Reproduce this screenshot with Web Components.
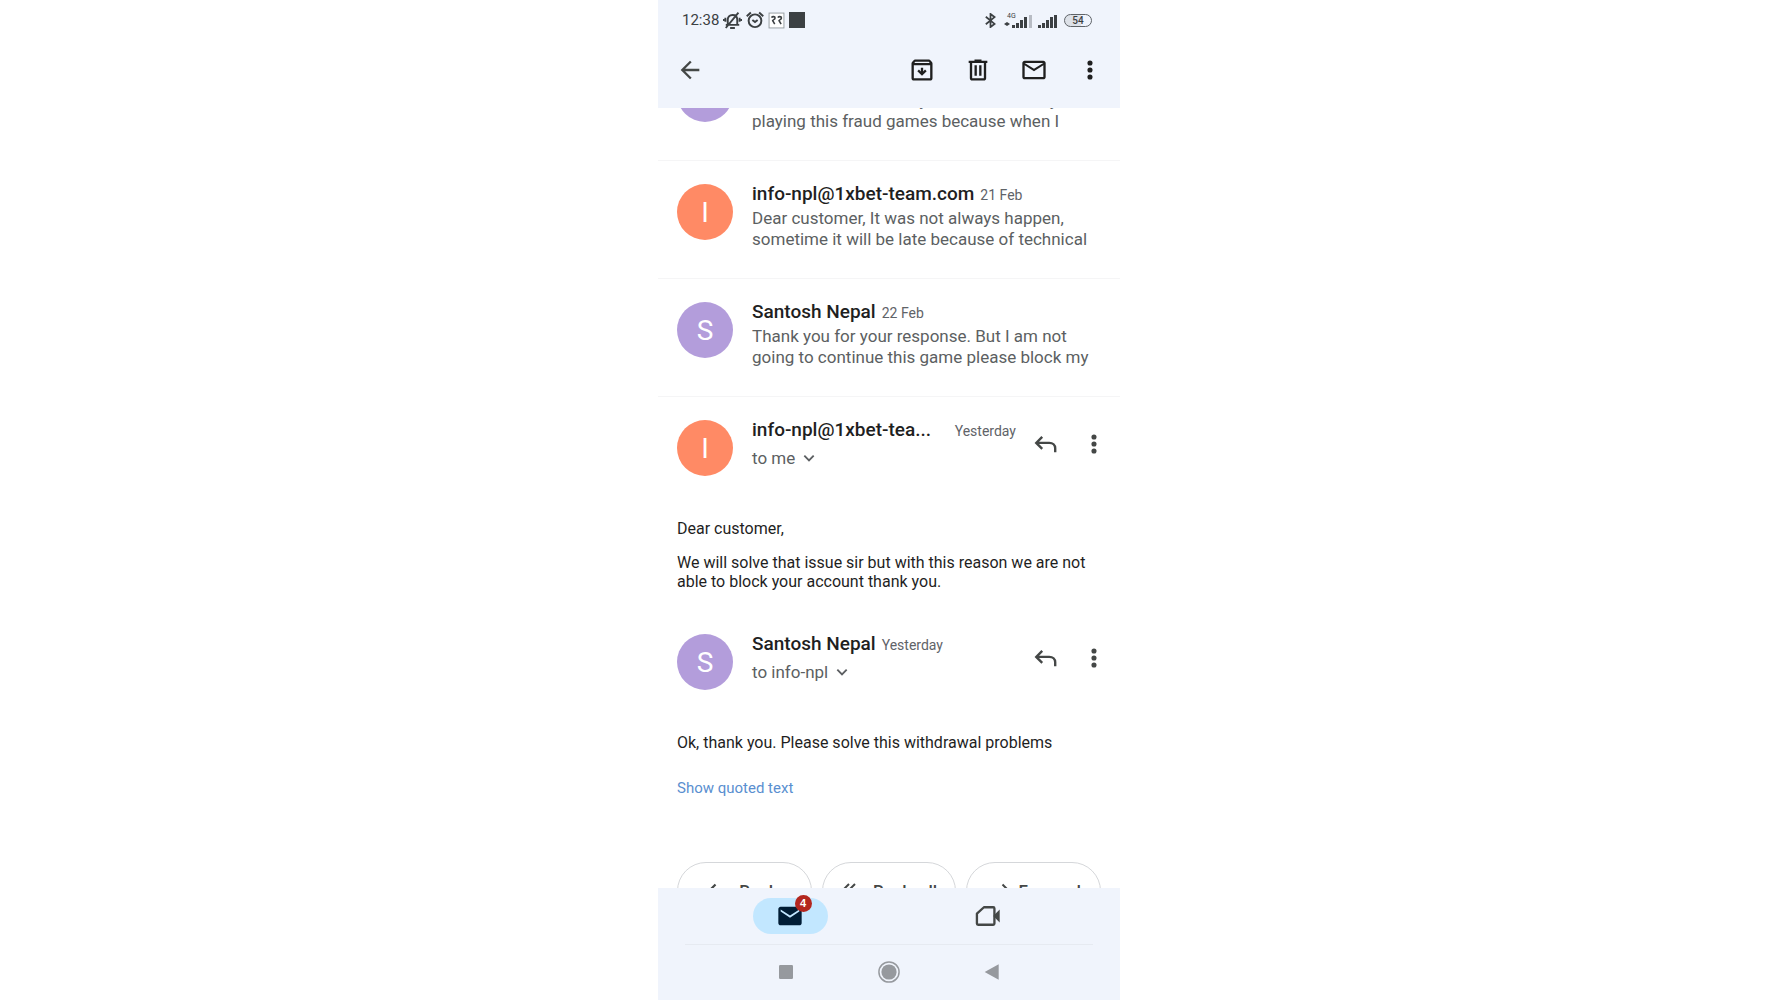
<!DOCTYPE html>
<html lang="en">
<head>
<meta charset="utf-8">
<meta name="viewport" content="width=device-width, initial-scale=1">
<title>Mail</title>
<style>
    html, body {
        margin: 0;
        height: 100%;
        background-color: #fff;
    }

    body {
        display: flex;
        justify-content: center;
        font-family: Roboto, "Liberation Sans", sans-serif;
        color: #1f1f1f;
    }

    .quoted {
        color: #5a8fd0;
        font-size: 15px;
        text-decoration: none;
    }

    p {
        margin: 0;
    }
</style>
</head>
<body>

<mail-app>
    <status-bar slot="top" time="12:38" battery="54"></status-bar>
    <app-bar slot="top"></app-bar>

    <mail-row initial="S" color="#b39ddb" name="Santosh Nepal" date="20 Feb">I want to shut down my ids as I am really playing this fraud games because when I</mail-row>
    <mail-row initial="I" color="#ff8a65" name="info-npl@1xbet-team.com" date="21 Feb">Dear customer, It was not always happen, sometime it will be late because of technical</mail-row>
    <mail-row initial="S" color="#b39ddb" name="Santosh Nepal" date="22 Feb">Thank you for your response. But I am not going to continue this game please block my</mail-row>

    <mail-message long-name initial="I" color="#ff8a65" name="info-npl@1xbet-tea..." date="Yesterday" to="to me">
        <p>Dear customer,</p>
        <p>We will solve that issue sir but with this reason we are not able to block your account thank you.</p>
    </mail-message>
    <mail-message initial="S" color="#b39ddb" name="Santosh Nepal" date="Yesterday" to="to info-npl">
        <p>Ok, thank you. Please solve this withdrawal problems</p>
        <a slot="more" class="quoted" href="#quoted">Show quoted text</a>
    </mail-message>

    <reply-bar></reply-bar>

    <tab-bar slot="bottom" unread="4"></tab-bar>
    <system-bar slot="bottom"></system-bar>
</mail-app>

<script>
// All icons are drawn on a 24 x 24 grid
const icons = {
    back: '<path d="M20 11H7.83l5.59-5.59L12 4l-8 8 8 8 1.41-1.41L7.83 13H20z"/>',
    archive: '<path d="M20.54 5.23l-1.39-1.68C18.88 3.21 18.47 3 18 3H6c-.47 0-.88.21-1.16.55L3.46 5.23C3.17 5.57 3 6.02 3 6.5V19c0 1.1.9 2 2 2h14c1.1 0 2-.9 2-2V6.5c0-.48-.17-.93-.46-1.27zM6.24 5h11.52l.83 1H5.42zM5 19V8h14v11zM11 10h2v3.2l1.6-1.6L16 13l-4 4-4-4 1.4-1.4 1.6 1.6z"/>',
    trash: '<path d="M15 4V3H9v1H4v2h1v13c0 1.1.9 2 2 2h10c1.1 0 2-.9 2-2V6h1V4zm2 15H7V6h10zM9 8h2v9H9zm4 0h2v9h-2z"/>',
    mail: '<path d="M22 6c0-1.1-.9-2-2-2H4c-1.1 0-2 .9-2 2v12c0 1.1.9 2 2 2h16c1.1 0 2-.9 2-2zm-2 0l-8 5-8-5zm0 12H4V8l8 5 8-5z"/>',
    mailFilled: '<path d="M20 4H4c-1.1 0-2 .9-2 2v12c0 1.1.9 2 2 2h16c1.1 0 2-.9 2-2V6c0-1.1-.9-2-2-2zm0 4.2l-8 5.2-8-5.2V6.5l8 5 8-5z"/>',
    dots: '<circle cx="12" cy="6" r="2.2"/><circle cx="12" cy="12" r="2.2"/><circle cx="12" cy="18" r="2.2"/>',
    reply: '<path d="M8.5 5.5L3 11l5.5 5.5M3 11h12c3.3 0 5.5 2 5.5 5v3.5" fill="none" stroke="currentColor" stroke-width="2.2"/>',
    replyAll: '<path d="M8 5l-6 6 6 6M14 5l-6 6 6 6M8 11h8c3.5 0 6 2 6 5v3" fill="none" stroke="currentColor" stroke-width="2"/>',
    forward: '<path d="M15.5 5.5L21 11l-5.5 5.5M21 11H9c-3.3 0-5.5 2-5.5 5v3.5" fill="none" stroke="currentColor" stroke-width="2"/>',
    chevron: '<path d="M5 8.5l7 7 7-7" fill="none" stroke="currentColor" stroke-width="2.8"/>',
    video: '<path d="M8.5 4.5h8c.6 0 1 .4 1 1v13c0 .6-.4 1-1 1h-13c-.6 0-1-.4-1-1V10z" fill="none" stroke="currentColor" stroke-width="2" stroke-linejoin="round"/><path d="M16.5 12L22 6.5v11z"/>',
    bellOff: '<path d="M6 17v-6c0-3.2 2-6 6-6s6 2.800 6 6v6M3.500 17.500h17M9 21.500h6M3.500 21.500L19.500 2M3 8.500v5M21 8.500v5M.500 10v2.500M23.500 10v2.500" fill="none" stroke="currentColor" stroke-width="2.400"/>',
    alarm: '<circle cx="12" cy="13" r="8.5" fill="none" stroke="currentColor" stroke-width="2.6"/><path d="M8.5 12l3.5 2.8 3.5-2.8M1 7l5.5-5M23 7l-5.5-5" fill="none" stroke="currentColor" stroke-width="2.6"/>',
    app: '<rect x="1.5" y="1.5" width="21" height="21" fill="#fff" stroke="#9aa0a6" stroke-width="1.4"/><path d="M5 8c1-2 5-2 5 .5S6.5 11 6.5 12l3 5M14 8c1-2 5-2 5 .5s-3.5 2.5-3.5 3.5l3 5" fill="none" stroke="currentColor" stroke-width="2.2"/>',
    block: '<rect width="24" height="24"/>',
    bluetooth: '<path d="M4.5 6L18.500 17.500 12 22.500v-21L18.500 6.500 4.500 18" fill="none" stroke="currentColor" stroke-width="2.800"/>',
    stop: '<rect width="24" height="24" rx="2"/>',
    home: '<circle cx="12" cy="12" r="11" fill="none" stroke="currentColor" stroke-width="1.6"/><circle cx="12" cy="12" r="8.3"/>',
    previous: '<path d="M1 12L22 .5v23z"/>'
};

class UiIcon extends HTMLElement {

    constructor() {
        super();
        this.attachShadow({mode: 'open'});
    }

    connectedCallback() {
        const size = this.getAttribute('size') || 28;
        this.shadowRoot.innerHTML = `
            <style>
                :host {
                    display: block;
                    flex: none;
                    width: ${size}px;
                    height: ${size}px;
                }

                svg {
                    display: block;
                    width: 100%;
                    height: 100%;
                    fill: currentColor;
                }
            </style>
            <svg viewBox="0 0 24 24" aria-hidden="true">${icons[this.getAttribute('name')]}</svg>
        `;
    }

}

class MailApp extends HTMLElement {

    constructor() {
        super();
        this.attachShadow({mode: 'open'});
        this.shadowRoot.innerHTML = `
            <style>
                :host {
                    display: flex;
                    flex-direction: column;
                    width: 100%;
                    max-width: 462px;
                    height: 100vh;
                }

                header, footer {
                    flex: none;
                    background-color: #f0f4fc;
                }

                main {
                    flex: 1;
                    min-height: 0;
                    overflow-y: auto;
                    scrollbar-width: none;
                }
            </style>
            <header><slot name="top"></slot></header>
            <main><slot></slot></main>
            <footer><slot name="bottom"></slot></footer>
        `;
    }

    // The thread opens a bit scrolled, so its first row slides under the app bar
    connectedCallback() {
        requestAnimationFrame(() => {
            this.shadowRoot.querySelector('main').scrollTop = 65;
        });
    }

}

class StatusBar extends HTMLElement {

    constructor() {
        super();
        this.attachShadow({mode: 'open'});
    }

    connectedCallback() {
        this.shadowRoot.innerHTML = `
            <style>
                :host {
                    display: flex;
                    justify-content: space-between;
                    align-items: center;
                    height: 40px;
                    padding: 0 28px 0 24px;
                    color: #3c4043;
                    font-size: 15px;
                }

                div {
                    display: flex;
                    align-items: center;
                    gap: 6px;
                }

                .left {
                    gap: 4px;
                }

                .cell {
                    width: 28px;
                    height: 16px;
                }

                .wifi {
                    width: 20px;
                    height: 16px;
                }

                svg {
                    display: block;
                    fill: currentColor;
                }

                .battery {
                    box-sizing: border-box;
                    width: 28px;
                    height: 13px;
                    border: 1px solid #5f6368;
                    border-radius: 7px;
                    background: linear-gradient(90deg, #dde1e8 60%, #f0f4fc 60%);
                    justify-content: center;
                    font-size: 10px;
                    line-height: 11px;
                    font-weight: 500;
                }
            </style>
            <div class="left">
                <span>${this.getAttribute('time')}</span>
                <ui-icon name="bellOff" size="19"></ui-icon>
                <ui-icon name="alarm" size="18"></ui-icon>
                <ui-icon name="app" size="17"></ui-icon>
                <ui-icon name="block" size="16"></ui-icon>
            </div>
            <div>
                <ui-icon name="bluetooth" size="15"></ui-icon>
                <svg class="cell" viewBox="0 0 28 16">
                    <text x="3" y="6" font-size="7">4G</text>
                    <path d="M0 12l3-2v4zM6 12l-3-2v4zM8 13h3v3H8zM12 11h3v5h-3zM16 8h3v8h-3zM20 5h3v11h-3z"/>
                    <path d="M25 3h3v13h-3z" fill="#b8bcc4"/>
                </svg>
                <svg class="wifi" viewBox="0 0 20 16">
                    <path d="M0 13h3v3H0zM4 11h3v5H4zM8 8h3v8H8zM12 5h3v11h-3zM16 3h3v13h-3z"/>
                </svg>
                <div class="battery">${this.getAttribute('battery')}</div>
            </div>
        `;
    }

}

class IconButton extends HTMLElement {

    constructor() {
        super();
        this.attachShadow({mode: 'open'});
    }

    connectedCallback() {
        this.shadowRoot.innerHTML = `
            <style>
                :host {
                    display: block;
                    flex: none;
                }

                button {
                    display: flex;
                    justify-content: center;
                    align-items: center;
                    width: var(--button-width, 56px);
                    height: 48px;
                    padding: 0;
                    border: 0;
                    background: none;
                    color: inherit;
                }
            </style>
            <button type="button" aria-label="${this.getAttribute('label')}">
                <ui-icon name="${this.getAttribute('icon')}" size="${this.getAttribute('size') || 28}"></ui-icon>
            </button>
        `;
    }

}

class AppBar extends HTMLElement {

    constructor() {
        super();
        this.attachShadow({mode: 'open'});
        this.shadowRoot.innerHTML = `
            <style>
                :host {
                    display: flex;
                    align-items: center;
                    padding: 6px 2px 14px 4px;
                    color: #1f1f1f;
                }

                .back {
                    margin-right: auto;
                    color: #444746;
                }
            </style>
            <icon-button class="back" icon="back" label="Back"></icon-button>
            <icon-button icon="archive" label="Archive"></icon-button>
            <icon-button icon="trash" label="Delete"></icon-button>
            <icon-button icon="mail" label="Mark as unread"></icon-button>
            <icon-button icon="dots" label="More options"></icon-button>
        `;
    }

}

class MailAvatar extends HTMLElement {

    constructor() {
        super();
        this.attachShadow({mode: 'open'});
        this.shadowRoot.innerHTML = `
            <style>
                :host {
                    display: flex;
                    flex: none;
                    justify-content: center;
                    align-items: center;
                    width: 56px;
                    height: 56px;
                    border-radius: 50%;
                    color: #fff;
                    font-size: 28px;
                }
            </style>
            <slot></slot>
        `;
    }

}

// Shared by the collapsed row and the open message
const headStyles = `
    .head {
        display: flex;
        align-items: baseline;
        gap: 6px;
        height: 24px;
        line-height: 24px;
        white-space: nowrap;
    }

    .name {
        font-size: 19px;
        font-weight: 500;
    }

    .date {
        color: #5f6368;
        font-size: 14px;
    }

    mail-avatar {
        margin: 2px 19px 0 0;
    }
`;

class MailRow extends HTMLElement {

    constructor() {
        super();
        this.attachShadow({mode: 'open'});
    }

    connectedCallback() {
        this.shadowRoot.innerHTML = `
            <style>
                :host {
                    display: flex;
                    align-items: flex-start;
                    padding: 21px 19px 28px;
                    border-bottom: 1px solid #f5f5f6;
                }

                .text {
                    flex: 1;
                    min-width: 0;
                }

                .snippet {
                    height: 42px;
                    margin-top: 2px;
                    overflow: hidden;
                    color: #5c5f62;
                    font-size: 17px;
                    line-height: 21px;
                }

                ${headStyles}
            </style>
            <mail-avatar style="background-color: ${this.getAttribute('color')}">${this.getAttribute('initial')}</mail-avatar>
            <div class="text">
                <div class="head">
                    <span class="name">${this.getAttribute('name')}</span>
                    <span class="date">${this.getAttribute('date')}</span>
                </div>
                <div class="snippet"><slot></slot></div>
            </div>
        `;
    }

}

class MailMessage extends HTMLElement {

    constructor() {
        super();
        this.attachShadow({mode: 'open'});
    }

    connectedCallback() {
        this.shadowRoot.innerHTML = `
            <style>
                ${headStyles}

                :host {
                    display: block;
                    padding-top: 21px;
                }

                /* A shortened name pushes the date to the end of the line */
                :host([long-name]) .head {
                    justify-content: space-between;
                }

                .top {
                    display: flex;
                    align-items: flex-start;
                    padding: 0 2px 0 19px;
                }

                .text {
                    flex: 1;
                    min-width: 0;
                    margin-right: 6px;
                }

                .to {
                    display: flex;
                    align-items: center;
                    gap: 6px;
                    margin-top: 4px;
                    padding: 0;
                    border: 0;
                    background: none;
                    color: #5c5f62;
                    font-family: inherit;
                    font-size: 17px;
                    line-height: 24px;
                }

                .actions {
                    display: flex;
                    margin-top: 2px;
                    --button-width: 48px;
                    color: #444746;
                }

                .body {
                    display: flex;
                    flex-direction: column;
                    gap: 15px;
                    padding: 43px 19px 20px;
                    font-size: 16px;
                    line-height: 19px;
                }

                ::slotted(a) {
                    align-self: flex-start;
                    margin-top: 12px;
                }
            </style>
            <div class="top">
                <mail-avatar style="background-color: ${this.getAttribute('color')}">${this.getAttribute('initial')}</mail-avatar>
                <div class="text">
                    <div class="head">
                        <span class="name">${this.getAttribute('name')}</span>
                        <span class="date">${this.getAttribute('date')}</span>
                    </div>
                    <button class="to" type="button">
                        <span>${this.getAttribute('to')}</span>
                        <ui-icon name="chevron" size="16"></ui-icon>
                    </button>
                </div>
                <div class="actions">
                    <icon-button icon="reply" size="26" label="Reply"></icon-button>
                    <icon-button icon="dots" label="More options"></icon-button>
                </div>
            </div>
            <div class="body">
                <slot></slot>
                <slot name="more"></slot>
            </div>
        `;
    }

}

class ReplyBar extends HTMLElement {

    constructor() {
        super();
        this.attachShadow({mode: 'open'});
        this.shadowRoot.innerHTML = `
            <style>
                :host {
                    display: flex;
                    gap: 10px;
                    padding: 44px 19px 24px;
                }

                button {
                    display: flex;
                    flex: 1;
                    justify-content: center;
                    align-items: center;
                    gap: 8px;
                    height: 58px;
                    padding: 0;
                    border: 1px solid #d5d7da;
                    border-radius: 29px;
                    background: none;
                    color: #444746;
                    font-family: inherit;
                    font-size: 17px;
                    font-weight: 500;
                    white-space: nowrap;
                }
            </style>
            <button type="button"><ui-icon name="reply" size="24"></ui-icon>Reply</button>
            <button type="button"><ui-icon name="replyAll" size="24"></ui-icon>Reply all</button>
            <button type="button"><ui-icon name="forward" size="24"></ui-icon>Forward</button>
        `;
    }

}

class TabBar extends HTMLElement {

    constructor() {
        super();
        this.attachShadow({mode: 'open'});
    }

    connectedCallback() {
        this.shadowRoot.innerHTML = `
            <style>
                :host {
                    display: block;
                    padding: 0 27px;
                }

                nav {
                    display: flex;
                    padding: 10px 6px;
                    border-bottom: 1px solid #e6eaf1;
                }

                button {
                    display: flex;
                    flex: 1;
                    justify-content: center;
                    padding: 0;
                    border: 0;
                    background: none;
                    color: #444746;
                }

                .pill {
                    position: relative;
                    display: flex;
                    justify-content: center;
                    align-items: center;
                    width: 75px;
                    height: 36px;
                    border-radius: 18px;
                }

                .active {
                    background-color: #c2e7ff;
                    color: #001d35;
                }

                /* sits over the corner of the mail icon */
                .badge {
                    position: absolute;
                    top: -3px;
                    right: 16px;
                    width: 17px;
                    height: 17px;
                    border-radius: 50%;
                    background-color: #b3261e;
                    color: #fff;
                    font-size: 11px;
                    font-weight: 700;
                    line-height: 17px;
                    text-align: center;
                }
            </style>
            <nav>
                <button type="button" aria-label="Mail">
                    <span class="pill active">
                        <ui-icon name="mailFilled" size="28"></ui-icon>
                        <span class="badge">${this.getAttribute('unread')}</span>
                    </span>
                </button>
                <button type="button" aria-label="Meet">
                    <span class="pill"><ui-icon name="video" size="28"></ui-icon></span>
                </button>
            </nav>
        `;
    }

}

class SystemBar extends HTMLElement {

    constructor() {
        super();
        this.attachShadow({mode: 'open'});
        this.shadowRoot.innerHTML = `
            <style>
                :host {
                    display: flex;
                    justify-content: center;
                    padding: 0 76px 2px;
                    color: #96999e;
                }

                button {
                    display: flex;
                    flex: 1;
                    justify-content: center;
                    align-items: center;
                    height: 53px;
                    padding: 0;
                    border: 0;
                    background: none;
                    color: inherit;
                }
            </style>
            <button type="button" aria-label="Recent apps"><ui-icon name="stop" size="14"></ui-icon></button>
            <button type="button" aria-label="Home"><ui-icon name="home" size="22"></ui-icon></button>
            <button type="button" aria-label="Back"><ui-icon name="previous" size="16"></ui-icon></button>
        `;
    }

}

customElements.define('ui-icon', UiIcon);
customElements.define('icon-button', IconButton);
customElements.define('mail-avatar', MailAvatar);
customElements.define('mail-app', MailApp);
customElements.define('status-bar', StatusBar);
customElements.define('app-bar', AppBar);
customElements.define('mail-row', MailRow);
customElements.define('mail-message', MailMessage);
customElements.define('reply-bar', ReplyBar);
customElements.define('tab-bar', TabBar);
customElements.define('system-bar', SystemBar);
</script>
</body>
</html>
